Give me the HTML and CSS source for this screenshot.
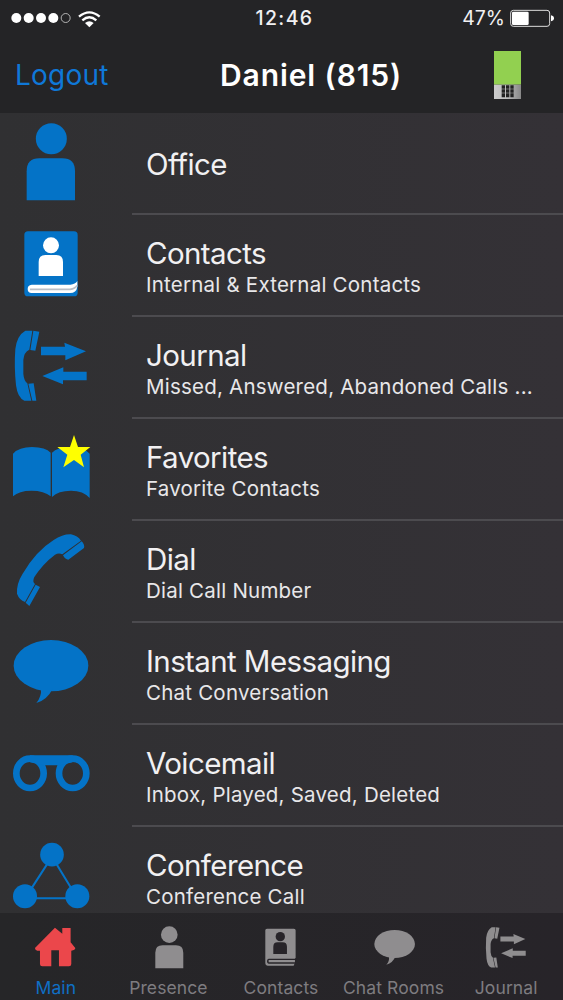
FILE: index.html
```html
<!DOCTYPE html>
<html lang="en">
<head>
<meta charset="utf-8">
<title>Main</title>
<link rel="stylesheet" href="styles.css">
</head>
<body>
<div class="phone">
  <header class="header">
    <div class="status">
      <svg class="signal" viewBox="0 0 330 108">
        <g fill="#fff"><circle cx="49" cy="54" r="15"/><circle cx="86" cy="54" r="15"/><circle cx="123" cy="54" r="15"/><circle cx="160" cy="54" r="15"/></g>
        <circle cx="197" cy="54" r="13.5" fill="none" stroke="#ccc" stroke-width="2.5"/>
        <g fill="none" stroke="#fff" stroke-width="7"><path d="M237 50Q268 24 299 50"/><path d="M247 61Q268 43 289 61"/></g>
        <path d="M255 69Q268 59 281 69L268 82Z" fill="#fff"/>
      </svg>
      <span class="clock">12:46</span>
      <div class="power"><span class="percent">47%</span>
        <svg class="battery" viewBox="0 0 132 60">
          <rect x="2" y="7" width="117" height="48" rx="8" fill="none" stroke="#ddd" stroke-width="3"/>
          <rect x="6" y="11" width="50" height="40" rx="4" fill="#fff"/>
          <path d="M123 22Q132 24 132 31T123 40Z" fill="#fff"/>
        </svg>
      </div>
    </div>
    <div class="nav">
      <span class="logout">Logout</span>
      <h1 class="name">Daniel (815)</h1>
      <svg class="device" viewBox="0 0 81 144">
        <defs><linearGradient id="metal"><stop offset="0" stop-color="#ccc"/><stop offset=".5" stop-color="#bbb"/><stop offset="1" stop-color="#888"/></linearGradient></defs>
        <rect width="81" height="101" fill="#92d050"/><rect y="101" width="81" height="43" fill="url(#metal)"/>
        <g fill="#222"><path d="M23 103h10v10h-10zM36 103h10v10h-10zM49 103h10v10h-10zM23 115h10v10h-10zM36 115h10v10h-10zM49 115h10v10h-10zM23 127h10v12h-10zM36 127h10v12h-10zM49 127h10v12h-10z"/></g>
      </svg>
    </div>
  </header>

  <main class="list">
    <div class="row">
      <svg class="icon" viewBox="0 9 396 306"><circle cx="154" cy="86" r="46.5"/><path d="M80 271V184Q80 145 118 145H187Q225 145 225 184V271Z"/></svg>
      <div class="text single"><div class="title">Office</div></div>
    </div>
    <div class="row">
      <svg class="icon" viewBox="0 315 396 306"><rect x="73" y="364" width="160" height="195" rx="11"/><g fill="#fff"><circle cx="153" cy="406" r="24"/><path d="M116 498V456Q116 435 136 435H169Q189 435 189 456V498ZM95 524H211Q226 523 232 513V530Q229 549 210 549H95Q83 549 83 537T95 524Z"/></g><path d="M90 538H210Q226 536 231 526" fill="none" stroke="#b9bec6" stroke-width="5"/></svg>
      <div class="text"><div class="title">Contacts</div><div class="sub">Internal &amp; External Contacts</div></div>
    </div>
    <div class="row">
      <svg class="icon" viewBox="0 21 396 306"><g id="journal"><path d="M76 62H97L88 119Q72 126 70 150V192Q72 213 82 220L94 272H73Q53 264 48 226Q42 170 46 117Q51 76 76 62Z"/><path d="M100 62L118 65L106 122L91 120ZM85 221L101 220L109 272H97ZM123 110H195L193 98L258 124L196 151V136H123ZM260 185H190V172L127 198L189 223V211H260Z"/></g></svg>
      <div class="text"><div class="title">Journal</div><div class="sub">Missed, Answered, Abandoned Calls ...</div></div>
    </div>
    <div class="row">
      <svg class="icon" viewBox="0 327 396 306"><path d="M39 431Q57 411 96 411Q137 412 152 428V559Q133 542 94 542Q57 542 39 559ZM156 428Q171 411 212 411Q252 412 269 431V564Q250 542 213 542Q175 542 156 561Z"/><path d="M222 375L234 411H271L242 434L252 472L222 450L190 472L202 434L172 411H210Z" fill="#ff0"/></svg>
      <div class="text"><div class="title">Favorites</div><div class="sub">Favorite Contacts</div></div>
    </div>
    <div class="row">
      <svg class="icon" viewBox="0 33 396 306"><path d="M243 92L187 133Q176 128 165 134Q129 161 103 201Q96 216 105 222L75 276Q58 270 51 251Q49 221 68 191Q108 123 161 90Q188 72 213 73Q233 77 243 92Z"/><path d="M245 94Q255 105 252 114L205 149Q196 149 189 136ZM107 224L120 231L88 288L77 278Z"/></svg>
      <div class="text"><div class="title">Dial</div><div class="sub">Dial Call Number</div></div>
    </div>
    <div class="row">
      <svg class="icon" viewBox="0 339 396 306"><ellipse cx="153" cy="467" rx="112" ry="77"/><path d="M123 536Q125 559 109 579Q142 569 158 536Z"/></svg>
      <div class="text"><div class="title">Instant Messaging</div><div class="sub">Chat Conversation</div></div>
    </div>
    <div class="row">
      <svg class="icon" viewBox="0 45 396 306"><g fill="none" stroke="#0473c7" stroke-width="20"><ellipse cx="90" cy="190" rx="41" ry="44"/><ellipse cx="218" cy="190" rx="41" ry="44"/></g><path d="M90 136H218V157L180 166H130L90 157Z"/></svg>
      <div class="text"><div class="title">Voicemail</div><div class="sub">Inbox, Played, Saved, Deleted</div></div>
    </div>
    <div class="row">
      <svg class="icon" viewBox="0 351 396 306"><path d="M156 434L75 559H232Z" transform="translate(0 6)" fill="none" stroke="#0473c7" stroke-width="6"/><circle cx="156" cy="434" r="35.5"/><circle cx="75" cy="559" r="36"/><circle cx="232" cy="559" r="36"/></svg>
      <div class="text"><div class="title">Conference</div><div class="sub">Conference Call</div></div>
    </div>
  </main>

  <nav class="tabs">
    <div class="tab active"><svg class="tabicon" viewBox="0 39 338 180"><path d="M105 144L165 83L187 101V84H212V127L226 144Q226 151 214 152V192Q214 199 207 199H177V151H154V199H127Q120 199 120 192V152H112Q105 151 105 144Z"/></svg><span class="label">Main</span></div>
    <div class="tab"><svg class="tabicon" viewBox="338 39 338 180"><circle cx="507" cy="104" r="25"/><path d="M465 205V158Q465 136 487 136H527Q549 136 549 158V205Z"/></svg><span class="label">Presence</span></div>
    <div class="tab"><svg class="tabicon" viewBox="676 39 338 180"><path d="M802 86H883Q888 86 888 91V175H886V188L882 197H804Q797 197 797 190V91Q797 86 802 86Z"/><g fill="#272429"><circle cx="842" cy="110" r="14"/><path d="M821 162V140Q821 127 834 127H849Q862 127 862 140V162ZM807 176H889V180H807V187H889V191H807Q802 191 802 184Q802 176 807 176Z"/></g></svg><span class="label">Contacts</span></div>
    <div class="tab"><svg class="tabicon" viewBox="170 39 338 180"><ellipse cx="340" cy="132" rx="61" ry="42"/><path d="M323 170Q325 184 315 194Q335 188 342 170Z"/></svg><span class="label">Chat Rooms</span></div>
    <div class="tab"><svg class="tabicon" viewBox="508 39 338 180"><use href="#journal" transform="translate(591 46) scale(.555 .575)"/></svg><span class="label">Journal</span></div>
  </nav>
</div>
</body>
</html>
```
FILE: styles.css
```css
* { box-sizing: border-box; }
body { margin: 0; background: #323134; font-family: Inter, "Liberation Sans", sans-serif; }
.phone { width: 563px; height: 1000px; display: flex; flex-direction: column; overflow: hidden; color: #f1f0f2; }
.header { height: 113px; flex: none; background: #242426; }
.status { height: 36px; display: grid; grid-template-columns: 1fr auto 1fr; align-items: center; }
.signal { width: 110px; height: 36px; }
.clock { font-size: 19.5px; font-weight: 500; letter-spacing: 1.4px; line-height: 36px; padding-left: 6px; }
.power { display: flex; align-items: center; justify-content: flex-end; gap: 5px; padding-right: 9px; }
.percent { font-size: 19.5px; }
.battery { width: 44px; height: 20px; }
.nav { height: 77px; display: grid; grid-template-columns: 205px auto 1fr; align-items: center; padding: 0 42px 0 15px; }
.logout { color: #0f78d8; font-size: 28px; letter-spacing: .2px; }
.name { margin: 0; color: #fff; font-size: 30px; font-weight: 600; letter-spacing: .9px; }
.device { width: 27px; height: 48px; justify-self: end; }
.list { flex: 1; min-height: 0; overflow: hidden; background: linear-gradient(90deg, #303032, #343136); }
.row { display: flex; height: 102px; }
.icon { width: 132px; height: 102px; flex: none; fill: #0473c7; }
.text { flex: 1; display: flex; flex-direction: column; justify-content: center; padding: 7px 0 0 14px; border-bottom: 2px solid #4c4b4f; white-space: nowrap; }
.single { padding-top: 3px; }
.title { font-size: 29.5px; line-height: 33px; letter-spacing: -.6px; }
.sub { font-size: 20.5px; line-height: 30px; letter-spacing: .22px; color: #e8e7e9; }
.tabs { height: 87px; flex: none; display: flex; background: linear-gradient(90deg, #262628, #272429); }
.tab { flex: 1; display: flex; flex-direction: column; align-items: center; color: #7e7c80; }
.tabicon { width: 100%; height: 60px; flex: none; fill: #8f8d8f; }
.active .tabicon { fill: #eb474b; }
.active .label { color: #0f6fc4; }
.label { font-size: 17.5px; line-height: 22px; letter-spacing: .1px; padding: 4px 1px 0 0; }
```
